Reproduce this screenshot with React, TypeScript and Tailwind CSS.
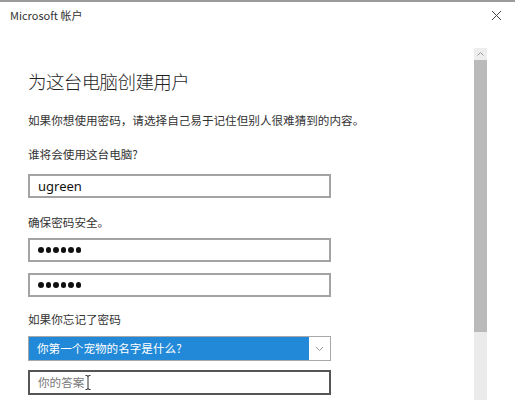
import React from 'react';

const font = { fontFamily: '"Noto Sans CJK SC", "Liberation Sans", sans-serif' };

function Dots() {
  return (
    <div className="flex items-center gap-[2px]">
      {Array.from({ length: 6 }).map((_, i) => (
        <span key={i} className="block h-[5.5px] w-[5.5px] rounded-full bg-[#111]" />
      ))}
    </div>
  );
}

function Field({ children, className = '' }: { children: React.ReactNode; className?: string }) {
  return (
    <div
      className={`flex h-[24px] w-[303px] items-center border-2 border-[#a3a3a3] bg-white pl-[8px] ${className}`}
    >
      {children}
    </div>
  );
}

export default function App() {
  return (
    <div className="relative h-[400px] w-[515px] overflow-hidden bg-white text-[#222]" style={font}>
      <div className="h-[2px] bg-[#9b9b9b]" />

      <div className="flex h-[26px] items-center justify-between pl-[10px] pr-[12px]">
        <span className="text-[11px] leading-none text-[#333]">Microsoft 帐户</span>
        <svg width="11" height="11" viewBox="0 0 11 11" className="mr-[1px]">
          <path d="M1 1 L10 10 M10 1 L1 10" stroke="#444" strokeWidth="1" />
        </svg>
      </div>

      <div className="flex">
        <div className="flex-1 pl-[28px] pt-[40px]">
          <h1 className="text-[18.5px] font-light leading-[26px] tracking-[-0.6px] text-[#1f1f1f]">为这台电脑创建用户</h1>

          <p className="mt-[18px] text-[11.6px] leading-[16px] text-[#333]">
            如果你想使用密码，请选择自己易于记住但别人很难猜到的内容。
          </p>

          <p className="mt-[18px] text-[11.6px] leading-[16px] text-[#333]">谁将会使用这台电脑?</p>

          <Field className="mt-[12px]">
            <span className="text-[13px] leading-none text-[#111]" style={{ fontFamily: '"Noto Sans", sans-serif' }}>
              ugreen
            </span>
          </Field>

          <p className="mt-[16px] text-[11.6px] leading-[16px] text-[#333]">确保密码安全。</p>

          <Field className="mt-[8px]">
            <Dots />
          </Field>

          <Field className="mt-[11px]">
            <Dots />
          </Field>

          <p className="mt-[14px] text-[11.6px] leading-[16px] text-[#333]">如果你忘记了密码</p>

          <div className="mt-[9px] flex h-[25px] w-[303px] border border-[#a8a8a8]">
            <div className="flex flex-1 items-center bg-[#2189d8] pl-[8px] text-[11.6px] text-white">
              你第一个宠物的名字是什么?
            </div>
            <div className="flex w-[21px] items-center justify-center bg-white">
              <svg width="9" height="6" viewBox="0 0 9 6">
                <path d="M1 1 L4.5 4.5 L8 1" stroke="#9a9a9a" strokeWidth="1" fill="none" />
              </svg>
            </div>
          </div>

          <div className="mt-[9px] flex h-[25px] w-[303px] items-center border-2 border-[#555] bg-white pl-[8px]">
            <span className="text-[11.6px] text-[#777]">你的答案</span>
            <svg width="6" height="15" viewBox="0 0 6 15" className="ml-[1px]">
              <path d="M0.5 0.5 H2 Q3 0.5 3 2 V13 Q3 14.5 2 14.5 H0.5 M5.5 0.5 H4 Q3 0.5 3 2 M3 13 Q3 14.5 4 14.5 H5.5" stroke="#333" strokeWidth="1" fill="none" />
            </svg>
          </div>
        </div>

        <div className="mr-[28px] mt-[20px] flex w-[13px] flex-col">
          <div className="flex h-[12px] items-center justify-center bg-[#ededed]">
            <svg width="7" height="4" viewBox="0 0 7 4">
              <path d="M0.5 3.5 L3.5 0.5 L6.5 3.5" stroke="#999" strokeWidth="1" fill="none" />
            </svg>
          </div>
          <div className="h-[272px] bg-[#bababa]" />
          <div className="h-[80px] bg-[#ebebeb]" />
        </div>
      </div>
    </div>
  );
}
